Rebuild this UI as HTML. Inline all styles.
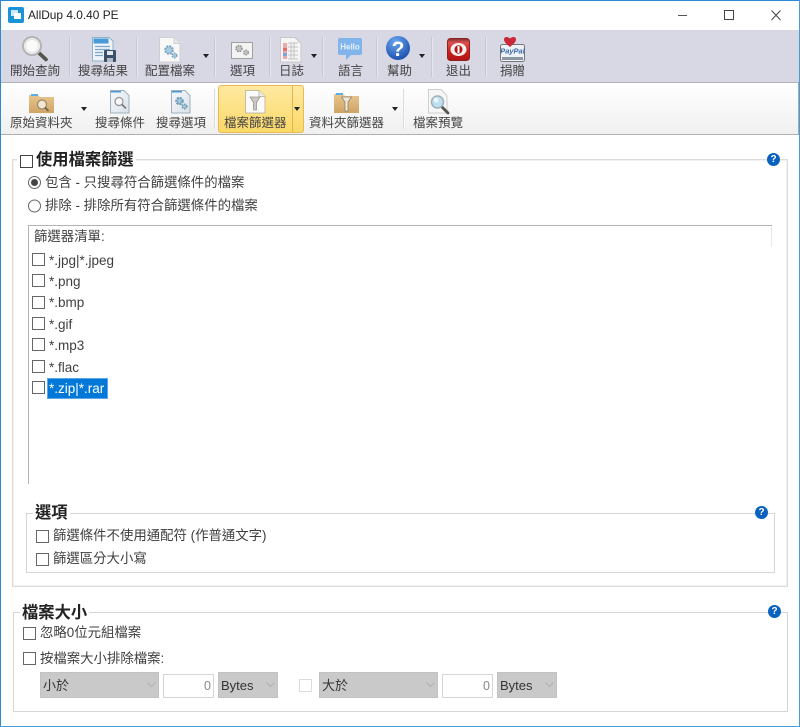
<!DOCTYPE html>
<html><head><meta charset="utf-8">
<style>
html,body{margin:0;padding:0;background:#fff}
#w{position:relative;width:800px;height:727px;overflow:hidden;background:#fff;font-family:"Liberation Sans","Noto Sans CJK TC",sans-serif;color:#333}
#w div,#w span.a{position:absolute;box-sizing:border-box}
.t{white-space:nowrap;font-size:13.4px;line-height:16px;color:#3f3f3f}
.l{white-space:nowrap;font-size:13.5px;line-height:16px;color:#3f3f3f}
.tb{white-space:nowrap;font-size:12.5px;line-height:16px;color:#444;text-align:center}
.h{white-space:nowrap;font-size:16.3px;line-height:20px;font-weight:bold;color:#222;background:#fff;padding:0 2px}
.c{width:13px;height:13px;border:1px solid #666;background:#fff}
.sep{width:2px;background:#c8c8d2;border-right:1px solid #e6e6ee}
.sep2{width:2px;background:#dcdcdc;border-right:1px solid #fafafa}
.dd{width:0;height:0;border-left:3.5px solid transparent;border-right:3.5px solid transparent;border-top:4px solid #222}
.g{border:1px solid #d6d6d6}
.g2{border:1px solid #dcdcdc;box-shadow:inset 0 0 0 1px #f2f2f2}
.q{width:13px;height:13px;border-radius:50%;background:#0a62c0;color:#fff;font-size:10px;line-height:13px;font-weight:bold;text-align:center;font-family:"Liberation Sans",sans-serif}
.sel{background:#c9c9c9;border:1px solid #c2c2c2;font-size:13px;line-height:26px;color:#333;padding-left:2px;height:26px}
.inp{background:#fff;border:1px solid #d6d6d6;font-size:12.5px;line-height:23px;color:#888;text-align:right;padding-right:2px;height:24px}
svg{position:absolute;overflow:visible}
</style></head><body>
<div id="w">
<!-- window border -->
<div style="left:0;top:0;width:800px;height:1px;background:#2a8ad4;z-index:9"></div>
<div style="left:0;top:0;width:1px;height:727px;background:#2a8ad4;z-index:9"></div>
<div style="left:799px;top:0;width:1px;height:727px;background:#4a9ad8;z-index:9"></div>
<div style="left:0;top:726px;width:800px;height:1px;background:#4a9ad8;z-index:9"></div>

<!-- title -->
<svg style="left:8px;top:6px" width="17" height="18" viewBox="0 0 17 18">
<rect x="0" y="1" width="16" height="16" rx="2" fill="#1a92d8"/>
<rect x="3" y="4" width="7" height="6" fill="#cfe9f8"/><rect x="6" y="7" width="7" height="6" fill="#fff"/>
</svg>
<div style="left:28px;top:6px;font-size:11.9px;line-height:18px;color:#222;white-space:nowrap">AllDup 4.0.40 PE</div>
<svg style="left:676px;top:8px" width="110" height="16" viewBox="0 0 110 16">
<line x1="2" y1="7.500" x2="11" y2="7.500" stroke="#555" stroke-width="1"/>
<rect x="48.500" y="2.500" width="9" height="9" fill="none" stroke="#444" stroke-width="1"/>
<path d="M95.500 2.500L104.500 12M104.500 2.500L95.500 12" stroke="#444" stroke-width="1" fill="none"/>
</svg>

<!-- main toolbar -->
<div style="left:1px;top:30px;width:798px;height:53px;background:#d8d7e4;border-bottom:1px solid #b2b2b8"></div>
<div class="sep" style="left:69px;top:37px;height:40px"></div>
<div class="sep" style="left:136px;top:37px;height:40px"></div>
<div class="sep" style="left:214px;top:37px;height:40px"></div>
<div class="sep" style="left:269px;top:37px;height:40px"></div>
<div class="sep" style="left:322px;top:37px;height:40px"></div>
<div class="sep" style="left:376px;top:37px;height:40px"></div>
<div class="sep" style="left:431px;top:37px;height:40px"></div>
<div class="sep" style="left:485px;top:37px;height:40px"></div>

<!-- search icon -->
<svg style="left:22px;top:36px" width="26" height="27" viewBox="0 0 26 27">
<line x1="17" y1="17" x2="24" y2="23.500" stroke="#55554c" stroke-width="3.600" stroke-linecap="round"/>
<circle cx="10" cy="10" r="9" fill="#f2f2f2" stroke="#b4b4b4" stroke-width="2"/>
<circle cx="10" cy="10" r="6.500" fill="#fbfbfb" stroke="#e2e2e2"/>
</svg>
<!-- results -->
<svg style="left:92px;top:37px" width="25" height="26" viewBox="0 0 25 26">
<path d="M0.500 0.500H17L21 4V24H.500Z" fill="#eef3f8" stroke="#8fb0c8"/>
<rect x="1.500" y="1.500" width="15" height="5" fill="#4a9ad8"/>
<path d="M3 9.500H18M3 12.500H18M3 15.500H11M3 18.500H11" stroke="#7ea6c6" stroke-width="1.200"/>
<rect x="12" y="13" width="12" height="12" rx="1" fill="#3a5068"/>
<rect x="15" y="14" width="6" height="4" fill="#dfe7ef"/><rect x="15" y="21" width="6" height="4" fill="#aebccb"/>
</svg>
<!-- config file -->
<svg style="left:159px;top:37px" width="22" height="26" viewBox="0 0 22 26">
<path d="M.500 .500H15L21 6.500V25H.500Z" fill="#f8f8f8" stroke="#cfcfcf"/>
<path d="M15 .500V6.500H21" fill="#e8e8e8" stroke="#cfcfcf"/>
<circle cx="10" cy="13" r="3.800" fill="#a8cbe0" stroke="#7aa4be" stroke-width="2" stroke-dasharray="2 1"/>
<circle cx="15.500" cy="18.500" r="2.300" fill="#a8cbe0" stroke="#7aa4be" stroke-width="1.500" stroke-dasharray="1.500 1"/>
</svg>
<div class="dd" style="left:203px;top:54px"></div>
<!-- options -->
<svg style="left:231px;top:42px" width="23" height="18" viewBox="0 0 23 18">
<rect x=".500" y=".500" width="21" height="16" fill="#f3f3f3" stroke="#a0a0a0"/>
<circle cx="8" cy="6.500" r="3" fill="#c4c4c4" stroke="#8c8c8c" stroke-width="1.500" stroke-dasharray="1.500 1"/>
<circle cx="15" cy="10.500" r="2.300" fill="#c4c4c4" stroke="#8c8c8c" stroke-width="1.300" stroke-dasharray="1.500 1"/>
</svg>
<!-- log -->
<svg style="left:280px;top:37px" width="22" height="26" viewBox="0 0 22 26">
<path d="M.500 .500H15L21 6.500V25H.500Z" fill="#f5f5f5" stroke="#c8c8c8"/>
<rect x="3" y="6" width="4" height="16" fill="#eaa8a8"/><rect x="3" y="11" width="4" height="3" fill="#e47070"/>
<rect x="3" y="16" width="4" height="3" fill="#7ea2dc"/>
<path d="M8 6H18M8 10H18M8 14H18M8 18H18M8 22H18M11 6V22M14 6V22" stroke="#c4c4c4" stroke-width="1"/>
</svg>
<div class="dd" style="left:311px;top:54px"></div>
<!-- hello -->
<svg style="left:338px;top:38px" width="24" height="23" viewBox="0 0 24 23">
<path d="M2 0H22A2 2 0 0 1 24 2V15A2 2 0 0 1 22 17H13L8 22V17H2A2 2 0 0 1 0 15V2A2 2 0 0 1 2 0Z" fill="#82b4ec"/>
<text x="12" y="11.500" font-size="8" font-weight="bold" fill="#e8f2fc" text-anchor="middle" font-family="Liberation Sans,sans-serif">Hello</text>
</svg>
<!-- help -->
<svg style="left:386px;top:36px" width="25" height="25" viewBox="0 0 25 25">
<defs><radialGradient id="hg" cx=".4" cy=".25" r=".85"><stop offset="0" stop-color="#6aa6ee"/><stop offset="1" stop-color="#1446a8"/></radialGradient></defs>
<circle cx="12" cy="12" r="12" fill="url(#hg)"/>
<text x="12" y="20" font-size="21" font-weight="bold" fill="#fff" text-anchor="middle" font-family="Liberation Sans,sans-serif">?</text>
</svg>
<div class="dd" style="left:419px;top:54px"></div>
<!-- exit -->
<svg style="left:447px;top:38px" width="24" height="24" viewBox="0 0 24 24">
<defs><linearGradient id="eg" x1="0" y1="0" x2="0" y2="1"><stop offset="0" stop-color="#7c3030"/><stop offset=".2" stop-color="#e05050"/><stop offset=".55" stop-color="#d02020"/><stop offset="1" stop-color="#b01414"/></linearGradient></defs>
<rect x=".500" y=".500" width="22" height="22" rx="3" fill="url(#eg)" stroke="#902020"/>
<ellipse cx="11.500" cy="11.500" rx="8" ry="6.500" fill="#f4f0f0"/><ellipse cx="11.500" cy="11.500" rx="4" ry="4.200" fill="#b81414"/>
<rect x="10.500" y="8" width="2" height="7" fill="#fff"/>
</svg>
<!-- donate -->
<svg style="left:499px;top:36px" width="27" height="26" viewBox="0 0 27 26">
<rect x="1.500" y="8.500" width="24" height="17" rx="2" fill="#eef2f6" stroke="#777"/>
<rect x="3" y="21" width="21" height="3" fill="#8a96a4"/>
<text x="13.500" y="17.500" font-size="7.500" font-weight="bold" font-style="italic" fill="#3a6aa8" text-anchor="middle" font-family="Liberation Sans,sans-serif">PayPal</text>
<path d="M11 11C7.500 8 5 6 5 3.500C5 1 8 0 11 2.500C14 0 17 1 17 3.500C17 6 14.500 8 11 11Z" fill="#c82838"/>
</svg>

<div class="tb" style="left:10px;top:63px;">開始查詢</div>
<div class="tb" style="left:78px;top:63px;">搜尋結果</div>
<div class="tb" style="left:145px;top:63px;">配置檔案</div>
<div class="tb" style="left:230px;top:63px;">選項</div>
<div class="tb" style="left:279px;top:63px;">日誌</div>
<div class="tb" style="left:338px;top:63px;">語言</div>
<div class="tb" style="left:387px;top:63px;">幫助</div>
<div class="tb" style="left:446px;top:63px;">退出</div>
<div class="tb" style="left:500px;top:63px;">捐贈</div>

<!-- second toolbar -->
<div style="left:1px;top:83px;width:798px;height:52px;background:linear-gradient(#fff,#f0f0f0);border-bottom:1px solid #b0b0b0;border-right:1px solid #aaa"></div>
<div class="sep2" style="left:214px;top:89px;height:40px"></div>
<div class="sep2" style="left:403px;top:89px;height:40px"></div>

<!-- yellow button -->
<div style="left:218px;top:85px;width:86px;height:48px;background:linear-gradient(#fee9a0,#fbd96a);border:1px solid #e8bc50;border-radius:3px"></div>
<div style="left:292px;top:86px;width:1px;height:46px;background:#e4b848"></div>
<div class="dd" style="left:294px;top:107px"></div>

<!-- folder search -->
<svg style="left:29px;top:93px" width="26" height="22" viewBox="0 0 26 22">
<defs><linearGradient id="fg" x1="0" y1="0" x2="0" y2="1"><stop offset="0" stop-color="#e8c690"/><stop offset="1" stop-color="#cfa464"/></linearGradient></defs>
<path d="M0 2H9L11 4H25V20H0Z" fill="url(#fg)"/>
<rect x="2" y="1" width="7" height="2" fill="#5ab0e6"/>
<circle cx="13" cy="11.500" r="4.500" fill="#f2e6d2" stroke="#9a8668" stroke-width="1.200"/>
<line x1="16" y1="14.500" x2="19.500" y2="18" stroke="#6e5e48" stroke-width="1.600"/>
</svg>
<div class="dd" style="left:81px;top:107px"></div>
<!-- search criteria -->
<svg style="left:110px;top:90px" width="20" height="24" viewBox="0 0 20 24">
<defs><linearGradient id="pg" x1="0" y1="0" x2="1" y2="1"><stop offset="0" stop-color="#f6f8fa"/><stop offset="1" stop-color="#d8e2ea"/></linearGradient></defs>
<path d="M.500 .500H14L19 5.500V23H.500Z" fill="url(#pg)" stroke="#9fb0bc"/>
<rect x="1" y="1" width="10" height="1.500" fill="#4a9ad8"/>
<circle cx="9" cy="11.500" r="4" fill="#f8f8f8" stroke="#939393" stroke-width="1.200"/>
<line x1="12" y1="14.500" x2="16" y2="18.500" stroke="#777" stroke-width="1.600"/>
</svg>
<!-- search options -->
<svg style="left:171px;top:90px" width="20" height="24" viewBox="0 0 20 24">
<path d="M.500 .500H14L19 5.500V23H.500Z" fill="url(#pg)" stroke="#9fb0bc"/>
<rect x="1" y="1" width="10" height="1.500" fill="#4a9ad8"/>
<circle cx="8.500" cy="11" r="3.200" fill="#9fc4dc" stroke="#6c96b0" stroke-width="2" stroke-dasharray="2 1"/>
<circle cx="13.500" cy="16.500" r="2.300" fill="#9fc4dc" stroke="#6c96b0" stroke-width="1.500" stroke-dasharray="1.500 1"/>
</svg>
<!-- file filter -->
<svg style="left:245px;top:90px" width="21" height="24" viewBox="0 0 21 24">
<path d="M.500 .500H14L20 6.500V23H.500Z" fill="#fafafa" stroke="#c8bca0"/>
<path d="M14 .500V6.500H20" fill="#eee" stroke="#c8bca0"/>
<path d="M5 7H15L11.500 12.500V20H8.500V12.500Z" fill="#c8c8c4" stroke="#989890" stroke-width=".8"/>
</svg>
<!-- folder filter -->
<svg style="left:334px;top:92px" width="26" height="22" viewBox="0 0 26 22">
<path d="M0 2H9L11 4H25V21H0Z" fill="url(#fg)"/>
<rect x="2" y="1" width="7" height="2" fill="#5ab0e6"/>
<path d="M7.500 5H17.500L14 10V19H11V10Z" fill="#ecE8dc" stroke="#94846a" stroke-width=".8"/>
</svg>
<div class="dd" style="left:392px;top:107px"></div>
<!-- file preview -->
<svg style="left:428px;top:89px" width="23" height="27" viewBox="0 0 23 27">
<path d="M.500 .500H13L19 6.500V24H.500Z" fill="#f6f6f6" stroke="#cfcfcf"/>
<line x1="14" y1="18" x2="20" y2="24" stroke="#55554c" stroke-width="2.800" stroke-linecap="round"/>
<circle cx="9.500" cy="13" r="6" fill="#bfe0f0" stroke="#9eb0ba" stroke-width="1.500"/>
<circle cx="8" cy="11" r="2.500" fill="#eaf6fc"/>
</svg>

<div class="tb" style="left:10px;top:115px;">原始資料夾</div>
<div class="tb" style="left:95px;top:115px;">搜尋條件</div>
<div class="tb" style="left:156px;top:115px;">搜尋選項</div>
<div class="tb" style="left:224px;top:115px;">檔案篩選器</div>
<div class="tb" style="left:309px;top:115px;">資料夾篩選器</div>
<div class="tb" style="left:413px;top:115px;">檔案預覽</div>

<!-- main group -->
<div class="g2" style="left:12px;top:159px;width:776px;height:428px"></div>
<div class="h" style="left:34px;top:150px">使用檔案篩選</div>
<div style="left:17px;top:152px;width:18px;height:16px;background:#fff"></div>
<div class="c" style="left:20px;top:155px;border-color:#444"></div>
<div class="q" style="left:767px;top:153px">?</div>

<svg style="left:28px;top:176px" width="14" height="38" viewBox="0 0 14 38">
<circle cx="6.500" cy="6.500" r="6" fill="#fff" stroke="#666"/><circle cx="6.500" cy="6.500" r="3.500" fill="#444"/>
<circle cx="6.500" cy="30" r="6" fill="#fff" stroke="#666"/>
</svg>
<div class="t" style="left:45px;top:175px">包含 - 只搜尋符合篩選條件的檔案</div>
<div class="t" style="left:45px;top:198px">排除 - 排除所有符合篩選條件的檔案</div>

<!-- list -->
<div style="left:28px;top:225px;width:744px;height:1px;background:#b4b4b4"></div>
<div style="left:28px;top:225px;width:1px;height:259px;background:#b4b4b4"></div>
<div style="left:771px;top:226px;width:1px;height:21px;background:#e8e8e8"></div>
<div class="t" style="left:34px;top:229px;">篩選器清單:</div>

<div class="c" style="left:32px;top:253px"></div><div class="l" style="left:49px;top:253px">*.jpg|*.jpeg</div>
<div class="c" style="left:32px;top:274px"></div><div class="l" style="left:49px;top:274px">*.png</div>
<div class="c" style="left:32px;top:296px"></div><div class="l" style="left:49px;top:295px">*.bmp</div>
<div class="c" style="left:32px;top:317px"></div><div class="l" style="left:49px;top:317px">*.gif</div>
<div class="c" style="left:32px;top:338px"></div><div class="l" style="left:49px;top:338px">*.mp3</div>
<div class="c" style="left:32px;top:360px"></div><div class="l" style="left:49px;top:360px">*.flac</div>
<div class="c" style="left:32px;top:381px"></div>
<div style="left:47px;top:378px;width:61px;height:21px;background:#0078d7;border:1px solid #5aa8e8"></div>
<div class="l" style="left:49px;top:381px;color:#fff">*.zip|*.rar</div>

<!-- options -->
<div class="g" style="left:26px;top:513px;width:749px;height:60px"></div>
<div class="h" style="left:33px;top:503px">選項</div>
<div class="q" style="left:755px;top:506px">?</div>
<div class="c" style="left:36px;top:530px"></div><div class="t" style="left:53px;top:528px">篩選條件不使用通配符 (作普通文字)</div>
<div class="c" style="left:36px;top:553px"></div><div class="t" style="left:53px;top:551px">篩選區分大小寫</div>

<!-- size -->
<div class="g" style="left:13px;top:612px;width:775px;height:100px"></div>
<div class="h" style="left:20px;top:603px">檔案大小</div>
<div class="q" style="left:768px;top:605px">?</div>
<div class="c" style="left:23px;top:627px"></div><div class="t" style="left:40px;top:625px">忽略0位元組檔案</div>
<div class="c" style="left:23px;top:652px"></div><div class="t" style="left:40px;top:651px">按檔案大小排除檔案:</div>

<div class="sel" style="left:40px;top:672px;width:119px">小於</div>
<svg style="left:147px;top:682px" width="9" height="6"><path d="M.500 .500L4.500 4.500L8.500 .500" stroke="#b0b0b0" fill="none"/></svg>
<div class="inp" style="left:163px;top:674px;width:51px">0</div>
<div class="sel" style="left:218px;top:672px;width:60px">Bytes</div>
<svg style="left:266px;top:682px" width="9" height="6"><path d="M.500 .500L4.500 4.500L8.500 .500" stroke="#b0b0b0" fill="none"/></svg>

<div class="c" style="left:299px;top:679px;border-color:#dcdcdc"></div>
<div class="sel" style="left:319px;top:672px;width:119px">大於</div>
<svg style="left:426px;top:682px" width="9" height="6"><path d="M.500 .500L4.500 4.500L8.500 .500" stroke="#b0b0b0" fill="none"/></svg>
<div class="inp" style="left:442px;top:674px;width:51px">0</div>
<div class="sel" style="left:497px;top:672px;width:60px">Bytes</div>
<svg style="left:545px;top:682px" width="9" height="6"><path d="M.500 .500L4.500 4.500L8.500 .500" stroke="#b0b0b0" fill="none"/></svg>
</div>
</body></html>
